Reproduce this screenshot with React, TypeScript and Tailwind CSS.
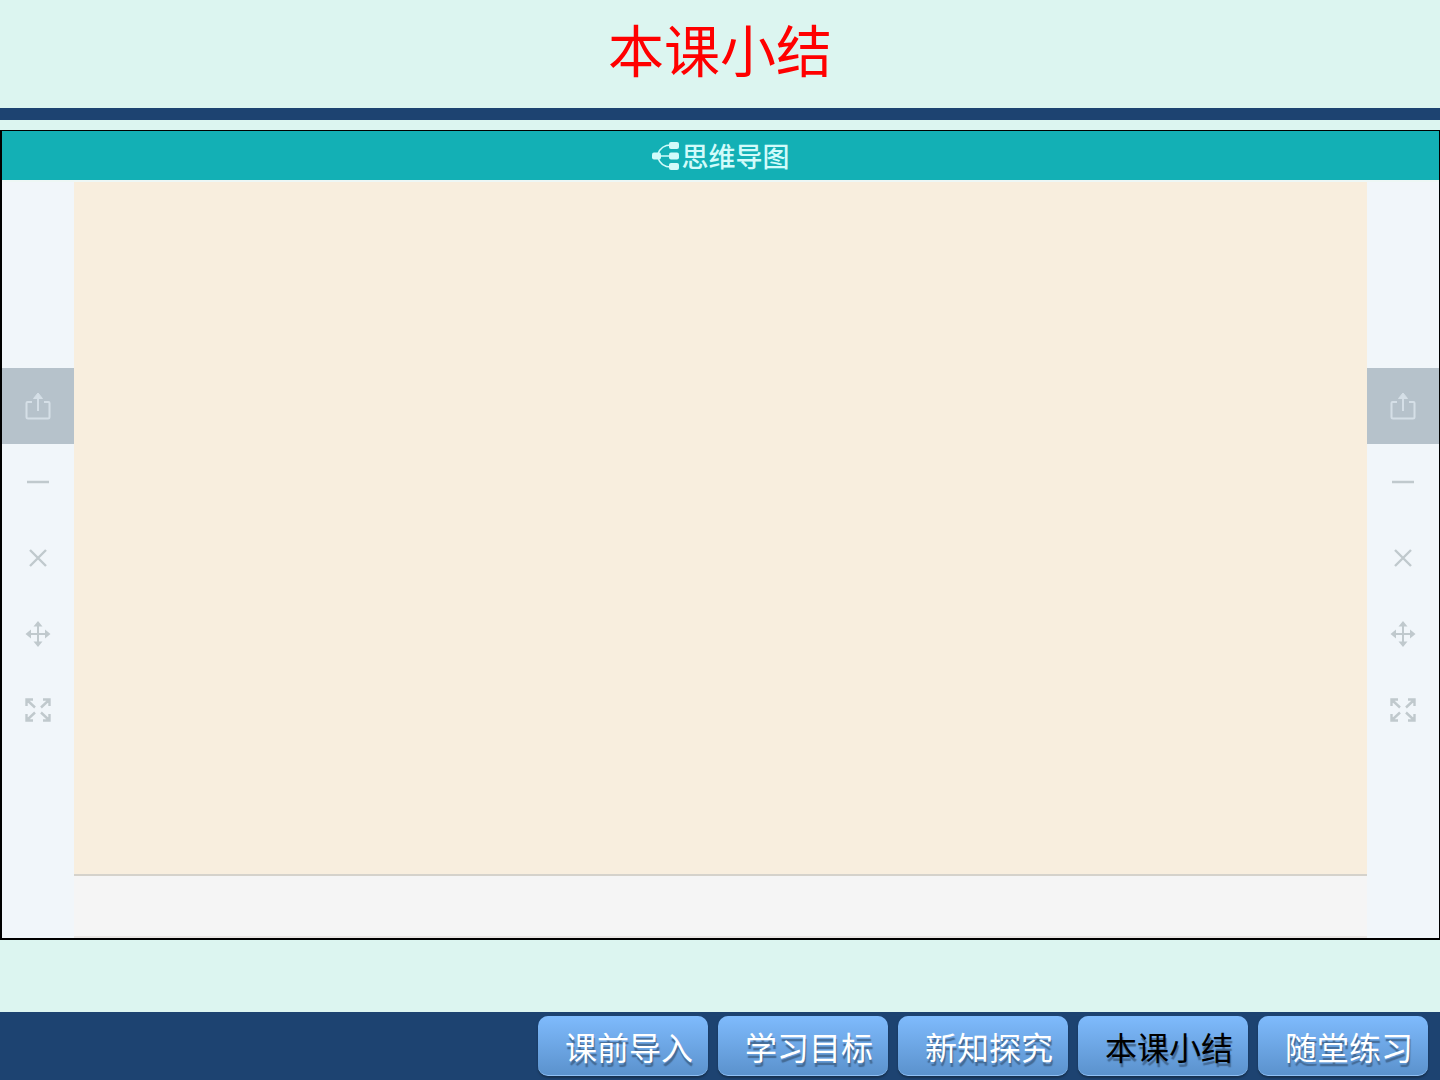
const LESSONS = ["课前导入", "学习目标", "新知探究", "本课小结", "随堂练习"];

const CURRENT = "本课小结";

const TOOLS = [
  { name: "share", label: "分享" },
  { name: "minimize", label: "最小化" },
  { name: "close", label: "关闭" },
  { name: "move", label: "移动" },
  { name: "expand", label: "全屏" },
];

function ToolIcon({ name }: { name: string }) {
  const line = { fill: "none", stroke: "currentColor", strokeWidth: 2 };
  return (
    <svg className="w-7 h-8" viewBox="0 0 28 32" aria-hidden="true">
      {name === "share" && (
        <g {...line}>
          <path d="M8 12H3.5Q2.5 12 2.5 13V27Q2.5 28.5 4 28.5H24Q25.5 28.5 25.5 27V13Q25.5 12 24.5 12H20" />
          <path d="M14 21V5" />
          <path d="M9.5 8.5L14 3L18.5 8.5Z" fill="currentColor" strokeWidth="1" />
        </g>
      )}
      {name === "minimize" && <path {...line} strokeWidth="2.5" d="M3 16H25" />}
      {name === "close" && <path {...line} strokeWidth="2.4" d="M6 8L22 24M22 8L6 24" />}
      {name === "move" && (
        <g>
          <path {...line} d="M14 6V26M4 16H24" />
          <path
            fill="currentColor"
            d="M14 3L18.5 8.5H9.5ZM14 29L9.5 23.5H18.5ZM1.5 16L7 11.5V20.5ZM26.5 16L21 20.5V11.5Z"
          />
        </g>
      )}
      {name === "expand" && (
        <path
          {...line}
          strokeWidth="2.4"
          d="M9 5.5H2.5V12M3 6L11 13.5M19 5.5H25.5V12M25 6L17 13.5M2.5 20V26.5H9M3 26L11 18.5M25.5 20V26.5H19M25 26L17 18.5"
        />
      )}
    </svg>
  );
}

function Toolbar({ label }: { label: string }) {
  return (
    <aside aria-label={label} className="w-[72px] shrink-0 flex flex-col justify-center pb-1 bg-[#f1f6fa]">
      {TOOLS.map((t) => (
        <button
          key={t.name}
          type="button"
          aria-label={t.label}
          className={
            t.name === "share"
              ? "h-[76px] flex items-center justify-center bg-[#b6c2cb] text-[#d5dfe7]"
              : "h-[76px] flex items-center justify-center text-[#c0c9cd]"
          }
        >
          <ToolIcon name={t.name} />
        </button>
      ))}
    </aside>
  );
}

export default function App() {
  return (
    <div className="min-h-screen flex flex-col bg-[#dcf5f0] font-['Noto_Sans_CJK_SC',sans-serif]">
      <header className="h-[120px] flex items-center justify-center pb-3 border-b-12 border-[#1d4371]">
        <h1 className="text-[56px] leading-none text-[#ff0000]">本课小结</h1>
      </header>

      <main className="flex-1 flex flex-col mt-2.5 mb-[72px] border border-l-2 border-b-2 border-black">
        <div className="h-[49px] flex items-center justify-center gap-0.5 bg-[#13b0b5] text-[#d2fbfa]">
          <svg className="w-7 h-7" viewBox="0 0 28 28" aria-hidden="true">
            <path d="M5 14H20M6 12Q9 3 19 3M6 16Q9 25 19 25" fill="none" stroke="currentColor" strokeWidth="1.6" />
            <g fill="currentColor">
              <rect x="0" y="10.5" width="9" height="7" rx="2" />
              <rect x="17" y="0" width="10" height="7" rx="2" />
              <rect x="17" y="10.5" width="10" height="7" rx="2" />
              <rect x="17" y="21" width="10" height="7" rx="2" />
            </g>
          </svg>
          <h2 className="text-[27px] leading-none font-medium">思维导图</h2>
        </div>

        <div className="flex-1 flex border-t-2 border-[#eef7f5]">
          <Toolbar label="左侧工具栏" />
          <section className="flex-1 flex flex-col">
            <div className="flex-1 bg-[#f8eede]" />
            <div className="h-16 bg-[#f5f5f5] border-t-2 border-t-[#d5d2cb] border-b-2 border-b-[#e9e6e4]" />
          </section>
          <Toolbar label="右侧工具栏" />
        </div>
      </main>

      <footer className="h-[68px] bg-[#1d4371]">
        <nav className="flex justify-end gap-2.5 px-3 pt-1">
          {LESSONS.map((name) => (
            <a
              key={name}
              href="#"
              aria-current={name === CURRENT ? "page" : undefined}
              className={`w-[170px] h-[60px] flex items-center justify-center pl-3 rounded-[10px] border-b border-[#8fc0f5] bg-linear-to-b from-[#7fbbfd] to-[#5b92cd] text-[32px] leading-none whitespace-nowrap shadow-[0_2px_2px_#16304f] [text-shadow:1px_4px_1px_#446a94] ${
                name === CURRENT ? "text-black" : "text-white"
              }`}
            >
              {name}
            </a>
          ))}
        </nav>
      </footer>
    </div>
  );
}
